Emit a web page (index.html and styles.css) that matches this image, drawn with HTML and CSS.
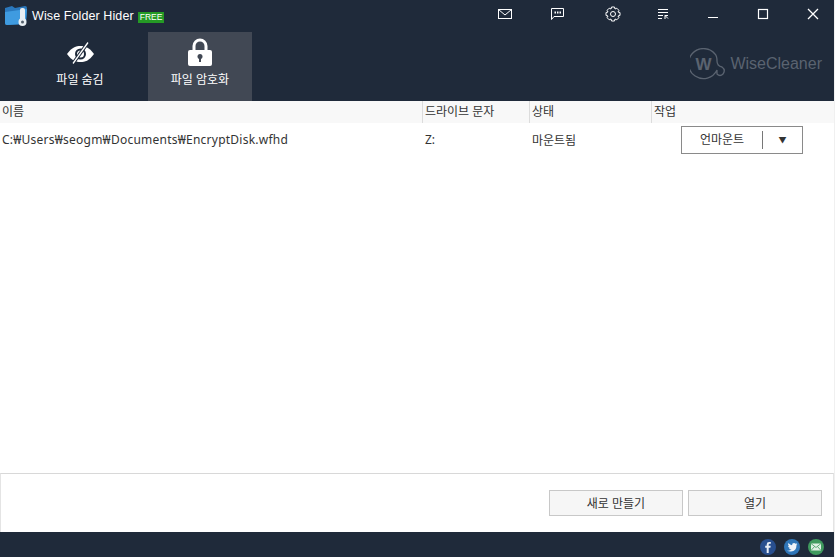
FILE: index.html
```html
<!DOCTYPE html>
<html lang="ko">
<head>
    <meta charset="UTF-8">
    <title>Wise Folder Hider</title>
    <link rel="stylesheet" href="styles.css">
</head>
<body>

    <div class="window">
        <header class="titlebar">
            <svg class="app-icon" width="24" height="22" viewBox="0 0 24 22">
                <path d="M1 3 L8 1 L11 3 L21 1 Q23 1 23 3 L22 17 Q22 19 20 19 L3 20 Q1 20 1 18 Z" fill="#2a78bd"/>
                <path d="M1 7 L23 4 L22 17 Q22 19 20 19 L3 20 Q1 20 1 18 Z" fill="#3f9be0"/>
                <rect x="16" y="3" width="5" height="13" rx="2" fill="#e8eef2"/>
                <circle cx="18.500" cy="17" r="4" fill="#e8eef2"/>
                <circle cx="18.500" cy="17" r="1.500" fill="#54606c"/>
            </svg>
            <span class="app-name">Wise Folder Hider</span>
            <span class="free-badge">FREE</span>
            <div class="title-icons">
                <button class="title-btn title-btn-mail">
                    <svg width="16" height="12" viewBox="0 0 16 12" fill="none" stroke="#fff"><rect x="1.500" y="1.500" width="13" height="9"/><path d="M1.500 1.500 L8 7 L14.500 1.500"/></svg>
                </button>
                <button class="title-btn title-btn-chat">
                    <svg width="14" height="14" viewBox="0 0 14 14" fill="none" stroke="#fff"><path d="M1.500 1.500 H13.500 V9.500 H4 L1.500 12.500 Z"/><path d="M4.500 5.500 H6 M7 5.500 H8.500 M9.500 5.500 H11" stroke-width="2"/></svg>
                </button>
                <button class="title-btn">
                    <svg width="16" height="16" viewBox="0 0 16 16" fill="none" stroke="#fff"><path d="M6.500 1 H9.500 L10 3 L11.800 2.200 L13.900 4.300 L13 6 L15 6.500 V9.500 L13 10 L13.900 11.700 L11.800 13.800 L10 13 L9.500 15 H6.500 L6 13 L4.200 13.800 L2.100 11.700 L3 10 L1 9.500 V6.500 L3 6 L2.100 4.300 L4.200 2.200 L6 3 Z"/><circle cx="8" cy="8" r="2.500"/></svg>
                </button>
                <button class="title-btn">
                    <svg width="12" height="12" viewBox="0 0 12 12" fill="none" stroke="#fff"><path d="M1 1.500 H11 M1 4.500 H11 M1 7.500 H6 M1 10.500 H5"/><path d="M8 11 V7.500 H11 M8 7.500 L11 10.500"/></svg>
                </button>
                <button class="title-btn">
                    <svg width="12" height="12" viewBox="0 0 12 12" fill="none" stroke="#fff"><path d="M1 9.500 H11"/></svg>
                </button>
                <button class="title-btn">
                    <svg width="12" height="12" viewBox="0 0 12 12" fill="none" stroke="#fff" stroke-width="1.200"><rect x="1.500" y="1.500" width="9" height="9"/></svg>
                </button>
                <button class="title-btn">
                    <svg width="12" height="12" viewBox="0 0 12 12" fill="none" stroke="#fff" stroke-width="1.300"><path d="M1 1 L11 11 M11 1 L1 11"/></svg>
                </button>
            </div>
        </header>

        <nav class="toolbar">
            <a class="tab tab-hide">
                <svg width="27" height="22" viewBox="0 0 27 22">
                    <path d="M0 12 C5 5 9 4 13.500 4 C18 4 22 5 27 12 C22 19 18 20 13.500 20 C9 20 5 19 0 12 Z" fill="#fff"/>
                    <circle cx="13.500" cy="12" r="4.500" fill="none" stroke="#1f2a3a" stroke-width="2"/>
                    <path d="M6 21.500 L21 0.500" stroke="#1f2a3a" stroke-width="3.400"/>
                    <path d="M6 21.500 L21 0.500" stroke="#fff" stroke-width="1.300"/>
                </svg>
                <span>파일 숨김</span>
            </a>
            <a class="tab tab-active">
                <svg width="24" height="28" viewBox="0 0 24 28">
                    <path d="M6 13 V8 A6 6 0 0 1 18 8 V13" fill="none" stroke="#fff" stroke-width="3"/>
                    <rect x="0" y="12" width="24" height="16" rx="2" fill="#fff"/>
                    <circle cx="12" cy="18.500" r="2.500" fill="#414854"/>
                    <rect x="11" y="19" width="2" height="5" fill="#414854"/>
                </svg>
                <span>파일 암호화</span>
            </a>
            <div class="brand">
                <svg width="36" height="32" viewBox="0 0 36 32" fill="none">
                    <path d="M27 22 A15 15 0 1 1 25 6 Q27 8 27 13 Q27 18 32 19 Q36 22 33 26 Q30 29 27 26 Z" stroke="#5a6370" stroke-width="1.300" fill="none"/>
                    <text x="5.500" y="22" class="brand-mark">W</text>
                </svg>
                <span>WiseCleaner</span>
            </div>
        </nav>

        <main class="content">
            <div class="table-row table-head">
                <div class="cell">이름</div>
                <div class="cell">드라이브 문자</div>
                <div class="cell">상태</div>
                <div class="cell">작업</div>
            </div>
            <div class="table-row table-body">
                <div class="cell cell-path">C:₩Users₩seogm₩Documents₩EncryptDisk.wfhd</div>
                <div class="cell">Z:</div>
                <div class="cell">마운트됨</div>
                <div class="cell cell-action">
                    <button class="split-btn">
                        <span class="split-label">언마운트</span>
                        <span class="split-arrow">▼</span>
                    </button>
                </div>
            </div>
        </main>

        <section class="actions">
            <button class="action-btn">새로 만들기</button>
            <button class="action-btn">열기</button>
        </section>

        <footer class="statusbar">
            <svg width="16" height="16" viewBox="0 0 16 16"><circle cx="8" cy="8" r="8" fill="#284f8f"/><path d="M8.700 14 V8.800 H10.400 L10.700 6.800 H8.700 V5.600 Q8.700 4.800 9.600 4.800 H10.800 V3 H9.200 Q6.700 3 6.700 5.400 V6.800 H5.200 V8.800 H6.700 V14 Z" fill="#e8eef6"/></svg>
            <svg width="16" height="16" viewBox="0 0 16 16"><circle cx="8" cy="8" r="8" fill="#2f76b8"/><path d="M3 11.500 Q6 12 7.500 10.500 Q5.500 10.500 5 9 L6 9 Q4 8.500 4 6.800 L5 7 Q3.500 5.500 4.400 4 Q6 6 8 6.200 Q8 4 10 4 Q11 4 11.500 4.700 L13 4.200 L12.300 5.400 L13.300 5.200 L12.500 6.200 Q12.500 12 7 12.500 Q4.500 12.600 3 11.500 Z" fill="#eef4fa"/></svg>
            <svg width="16" height="16" viewBox="0 0 16 16"><circle cx="8" cy="8" r="8" fill="#3f9a5e"/><rect x="3" y="4.500" width="10" height="7" fill="#dff0e4"/><path d="M3 4.500 L8 8.500 L13 4.500 M3 11.500 L6.500 7.500 M13 11.500 L9.500 7.500" fill="none" stroke="#3f9a5e" stroke-width="0.800"/></svg>
        </footer>
    </div>

</body>
</html>
```

FILE: styles.css
```css
* {
    margin: 0;
    padding: 0;
    box-sizing: border-box;
}

body {
    font-family: "Noto Sans", "Noto Sans CJK KR", sans-serif;
    font-size: 12px;
    color: #333;
    background: #fff;
    overflow: hidden;
}

button {
    font: inherit;
    color: inherit;
    background: none;
    border: none;
}

.window {
    display: flex;
    flex-direction: column;
    width: 835px;
    height: 557px;
    border-right: 1px solid #f0f0f0;
}

/* title bar */
.titlebar {
    display: flex;
    align-items: center;
    flex: 0 0 32px;
    padding-left: 4px;
    background: #1f2a3a;
    color: #fff;
}

.app-icon {
    margin-right: 4px;
}

.app-name {
    font-family: "Liberation Sans", sans-serif;
    font-size: 12.500px;
    letter-spacing: 0.100px;
}

.free-badge {
    margin: 3px 0 0 4px;
    padding: 0 2px;
    font-family: "Liberation Sans", sans-serif;
    font-size: 8.500px;
    line-height: 11px;
    background: #259a25;
}

.title-icons {
    display: flex;
    gap: 26px;
    margin-left: auto;
    padding-right: 9px;
    align-self: flex-start;
}

.title-btn {
    display: flex;
    justify-content: center;
    align-items: center;
    height: 28px;
    width: 24px;
}

.title-btn-mail {
    margin-right: 2px;
}

.title-btn-chat {
    margin-right: 6px;
}

/* big tabs */
.toolbar {
    display: flex;
    flex: 0 0 69px;
    background: #1f2a3a;
}

.tab {
    display: flex;
    flex-direction: column;
    align-items: center;
    color: #fff;
    height: 100%;
    font-size: 12px;
}

.tab span {
    line-height: 16px;
}

.tab-hide {
    width: 148px;
    padding: 10px 0 0 12px;
    gap: 8px;
}

.tab-active {
    width: 104px;
    padding-top: 6px;
    gap: 6px;
    background: #414854;
}

.brand {
    display: flex;
    align-items: center;
    gap: 4px;
    margin-left: auto;
    padding: 0 12px 6px 0;
    color: #5a6370;
    font-family: "Liberation Sans", sans-serif;
    font-size: 16px;
}

.brand-mark {
    font-family: "Liberation Sans", sans-serif;
    font-size: 17px;
    font-weight: bold;
    fill: #5a6370;
}

/* table */
.content {
    flex: 1;
}

.table-row {
    display: grid;
    grid-template-columns: 423px 107px 122px 1fr;
}

.table-head {
    height: 22px;
    background: #f8f8f8;
}

.table-head .cell {
    line-height: 22px;
    padding-left: 2px;
    border-right: 1px solid #dcdcdc;
}

.table-head .cell:last-child {
    border-right: none;
}

.table-body {
    height: 33px;
    align-items: center;
}

.table-body .cell {
    padding-left: 2px;
}

.table-body .cell-path {
    letter-spacing: 0.240px;
}

.cell-action {
    display: flex;
    padding-left: 29px !important;
}

.split-btn {
    display: flex;
    align-items: center;
    width: 122px;
    height: 28px;
    border: 1px solid #8a8a8a;
    background: #fff;
}

.split-label {
    width: 81px;
    line-height: 18px;
    text-align: center;
    border-right: 1px solid #777;
}

.split-arrow {
    flex: 1;
    font-size: 8px;
    text-align: center;
    color: #333;
}

/* bottom buttons */
.actions {
    display: flex;
    justify-content: flex-end;
    gap: 5px;
    flex: 0 0 59px;
    padding: 16px 11px 0 0;
    border-top: 1px solid #d8d8d8;
    border-left: 1px solid #e4e4e4;
    border-right: 1px solid #e4e4e4;
}

.action-btn {
    width: 134px;
    height: 26px;
    background: #f6f6f6;
    border: 1px solid #c8c8c8;
}

.statusbar {
    display: flex;
    align-items: center;
    justify-content: flex-end;
    gap: 8px;
    flex: 0 0 25px;
    padding: 4px 10px 0 0;
    background: #1f2a3a;
}
```
